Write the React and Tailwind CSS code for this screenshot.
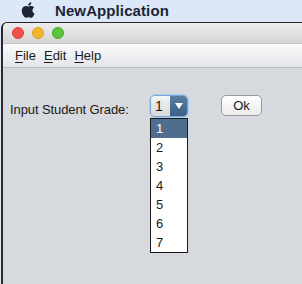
import React from "react";

export default function App() {
  const items = ["1", "2", "3", "4", "5", "6", "7"];
  return (
    <div className="w-[302px] h-[284px] overflow-hidden bg-[#dce8f8] relative" style={{ fontFamily: '"Liberation Sans", Arial, sans-serif' }}>
      {/* mac menu bar */}
      <div className="h-[22px] flex items-center">
        <svg className="ml-[21px] w-[14px] h-[16px] -mt-[2px]" viewBox="0 0 170 200">
          <path fill="#1d2535" d="M140.6 106.3c-.2-24.6 20.1-36.4 21-37-11.4-16.7-29.2-19-35.6-19.3-15.1-1.5-29.6 8.9-37.3 8.9-7.7 0-19.6-8.7-32.2-8.5-16.5.3-31.8 9.6-40.4 24.4-17.2 29.9-4.4 74.1 12.4 98.3 8.2 11.8 17.9 25.1 30.7 24.6 12.3-.5 17-8 31.9-8s19.1 8 32.2 7.7c13.3-.2 21.7-12 29.8-23.9 9.4-13.7 13.300-27 13.5-27.7-.3-.1-25.8-9.9-26-39.5zM116.3 34c6.8-8.2 11.4-19.7 10.1-31.1-9.8.4-21.7 6.5-28.7 14.7-6.3 7.3-11.8 18.9-10.3 30.1 10.9.8 22.1-5.6 28.9-13.7z" />
        </svg>
        <span className="ml-[20px] text-[15px] font-bold text-[#1d2535] tracking-[0.1px]">NewApplication</span>
      </div>
      {/* window */}
      <div className="absolute left-[1px] top-[22px] right-0 bottom-0 rounded-tl-[6px] border-l-[2px] border-t border-[#2a2a2a] bg-[#d6d9de] overflow-hidden">
        <div className="h-[21px] bg-gradient-to-b from-[#ececec] to-[#d6d6d6] flex items-center gap-[8px] pl-[9px] border-b border-[#c4c4c4]">
          <div className="w-[12px] h-[12px] rounded-full bg-[#f0504a] border border-[#d8403a]" />
          <div className="w-[12px] h-[12px] rounded-full bg-[#f5b52a] border border-[#dc9e20]" />
          <div className="w-[12px] h-[12px] rounded-full bg-[#5bc43e] border border-[#46a62e]" />
        </div>
        <div className="h-[24px] bg-gradient-to-b from-[#fbfbfb] to-[#e2e4e8] border-b border-[#b8bbc0] flex items-center pl-[12px] text-[13px] text-[#1a1a1a] gap-[8px]">
          <span><span className="underline underline-offset-2">F</span>ile</span>
          <span><span className="underline underline-offset-2">E</span>dit</span>
          <span><span className="underline underline-offset-2">H</span>elp</span>
        </div>
        <div className="relative">
          <div className="absolute left-[7px] top-[32px] text-[13px] text-[#1a1a1a] tracking-[-0.1px]">Input Student Grade:</div>
          <div className="absolute left-[147px] top-[27px] w-[38px] h-[22px] rounded-[5px] border border-[#7aa6d8] shadow-[0_0_0_1px_#a9c8ec] flex overflow-hidden">
            <div className="flex-1 bg-gradient-to-b from-[#f4f4f4] to-[#d8d8d8] text-[14px] text-[#1a1a1a] pl-[4px] leading-[20px]">1</div>
            <div className="w-[17px] bg-gradient-to-b from-[#5a7fa3] to-[#3c5f85] flex items-center justify-center">
              <svg width="8" height="6" viewBox="0 0 8 6"><path d="M0 0h8L4 6z" fill="#fff" /></svg>
            </div>
          </div>
          <div className="absolute left-[218px] top-[27px] w-[41px] h-[21px] rounded-[5px] border border-[#9a9a9a] bg-gradient-to-b from-[#ffffff] to-[#ececec] flex items-center justify-center text-[13px] text-[#1a1a1a]">Ok</div>
          <div className="absolute left-[147px] top-[50px] w-[38px] border border-[#1a1a1a] bg-white">
            {items.map((it, i) => (
              <div key={it} className={`h-[19px] pl-[5px] text-[13px] leading-[19px] ${i === 0 ? "bg-[#4f6d8f] text-white" : "text-[#1a1a1a]"}`}>{it}</div>
            ))}
          </div>
        </div>
      </div>
    </div>
  );
}
